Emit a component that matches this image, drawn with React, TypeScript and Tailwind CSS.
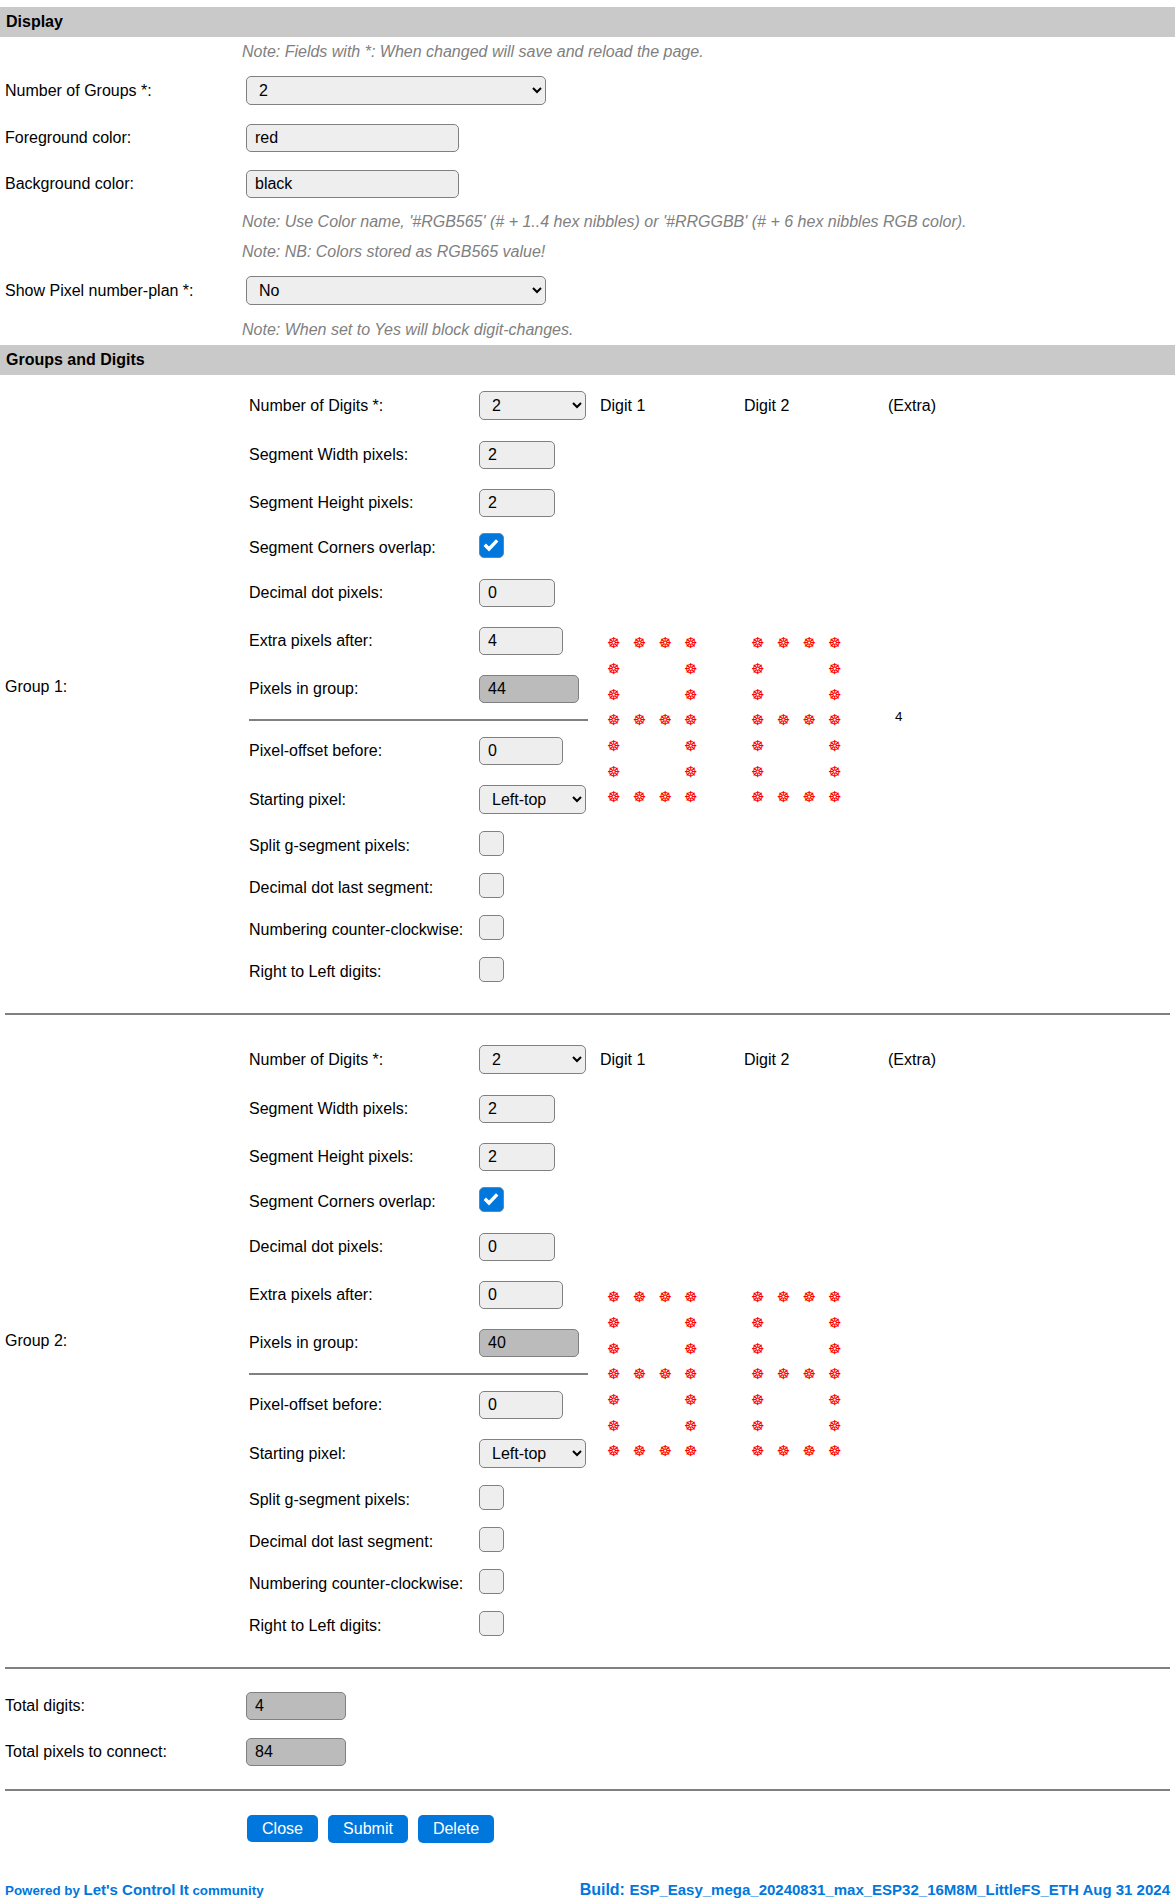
import React from "react";

const field =
  "h-[28px] rounded-[5px] border border-[#808080] bg-[#eeeeee] pl-2 pr-1 text-[16px] text-black outline-none";
const readOnlyField =
  "h-[28px] w-[100px] rounded-[5px] border border-[#808080] bg-[#bbbbbb] pl-2 pr-1 text-[16px] text-black outline-none";
const selectBox =
  "h-[29px] rounded-[5px] border border-[#808080] bg-[#eeeeee] pl-2 pr-0 text-[16px] text-black outline-none";

function Heading({ children }: { children: React.ReactNode }) {
  return (
    <h2 className="flex h-[30px] items-center bg-[#c9c9c9] pl-[6px] text-[16px] font-bold">{children}</h2>
  );
}

function Note({ className, children }: { className: string; children: React.ReactNode }) {
  return (
    <div className={`flex items-center pl-[242px] text-[16px] italic text-[#808080] ${className}`}>
      {children}
    </div>
  );
}

function Row({ label, className, children }: { label: string; className: string; children: React.ReactNode }) {
  return (
    <div className={`flex items-center ${className}`}>
      <span className="w-[246px] pl-[5px]">{label}</span>
      {children}
    </div>
  );
}

function GroupRow({ label, height, children }: { label: string; height: string; children: React.ReactNode }) {
  return (
    <div className={`flex items-center ${height}`}>
      <span className="w-[230px] whitespace-nowrap">{label}</span>
      {children}
    </div>
  );
}

function CheckRow({ label, height, checked = false }: { label: string; height: string; checked?: boolean }) {
  return (
    <div className={`flex items-center ${height}`}>
      <span className="w-[230px] whitespace-nowrap pt-[5px]">{label}</span>
      <span
        role="checkbox"
        aria-checked={checked}
        className={`flex h-[25px] w-[25px] items-center justify-center rounded-[5px] border border-[#808080] ${
          checked ? "bg-[#0077dd]" : "bg-[#eeeeee]"
        }`}
      >
        {checked && (
          <svg width="23" height="23" viewBox="0 0 23 23" fill="none" stroke="#fff" strokeWidth="3.4">
            <path d="M4.8 10.8 9 15 17.2 6.4" />
          </svg>
        )}
      </span>
    </div>
  );
}

const segmentMap = ["####", "#  #", "#  #", "####", "#  #", "#  #", "####"];

function Digit({ title }: { title: string }) {
  return (
    <div className="w-[144px]">
      <div className="flex h-[49px] items-center">{title}</div>
      <div className="ml-[1px] mt-[201px] grid w-[102.6px] grid-cols-4">
        {segmentMap.flatMap((line, y) =>
          line.split("").map((c, x) => (
            <span
              key={`${y}-${x}`}
              className="flex h-[25.67px] items-center justify-center font-['DejaVu_Sans',sans-serif] text-[15px] leading-none text-[#ff0000]"
            >
              {c === "#" ? "☸" : ""}
            </span>
          )),
        )}
      </div>
    </div>
  );
}

function Group({ name, extra, total }: { name: string; extra: string; total: string }) {
  return (
    <section className="flex h-[632px]">
      <div className="flex h-[611px] w-[249px] items-center pl-[5px]">{name}</div>
      <div className="w-[339px]">
        <GroupRow label="Number of Digits *:" height="h-[49px]">
          <select className={`${selectBox} w-[107px]`} defaultValue="2">
            <option>2</option>
          </select>
        </GroupRow>
        <GroupRow label="Segment Width pixels:" height="h-[50px]">
          <input className={`${field} w-[76px]`} defaultValue="2" />
        </GroupRow>
        <GroupRow label="Segment Height pixels:" height="h-[46px]">
          <input className={`${field} w-[76px]`} defaultValue="2" />
        </GroupRow>
        <CheckRow label="Segment Corners overlap:" height="h-[39px]" checked />
        <GroupRow label="Decimal dot pixels:" height="h-[56px]">
          <input className={`${field} w-[76px]`} defaultValue="0" />
        </GroupRow>
        <GroupRow label="Extra pixels after:" height="h-[40px]">
          <input className={`${field} w-[84px]`} defaultValue={extra} />
        </GroupRow>
        <GroupRow label="Pixels in group:" height="h-[56px]">
          <input className={readOnlyField} defaultValue={total} readOnly />
        </GroupRow>
        <hr className="mb-1 mt-[2px] border-t-2 border-[#808080]" />
        <GroupRow label="Pixel-offset before:" height="h-[52px]">
          <input className={`${field} w-[84px]`} defaultValue="0" />
        </GroupRow>
        <GroupRow label="Starting pixel:" height="h-[45px]">
          <select className={`${selectBox} w-[107px]`} defaultValue="Left-top">
            <option>Left-top</option>
          </select>
        </GroupRow>
        <CheckRow label="Split g-segment pixels:" height="h-[43px]" />
        <CheckRow label="Decimal dot last segment:" height="h-[41px]" />
        <CheckRow label="Numbering counter-clockwise:" height="h-[43px]" />
        <CheckRow label="Right to Left digits:" height="h-[41px]" />
      </div>
      <div className="flex pl-3">
        <Digit title="Digit 1" />
        <Digit title="Digit 2" />
        <div>
          <div className="flex h-[49px] items-center">(Extra)</div>
          {extra !== "0" && <div className="mt-[276px] pl-[7px] text-[13.33px] leading-[21px]">{extra}</div>}
        </div>
      </div>
    </section>
  );
}

export default function App() {
  return (
    <main className="h-[1899px] w-[1175px] overflow-hidden bg-white pt-[7px] font-['Liberation_Sans',Arial,sans-serif] text-[16px] leading-[20px] text-black">
      <Heading>Display</Heading>
      <Note className="h-[29px]">Note: Fields with *: When changed will save and reload the page.</Note>
      <Row label="Number of Groups *:" className="h-[49px]">
        <select className={`${selectBox} w-[300px]`} defaultValue="2">
          <option>2</option>
        </select>
      </Row>
      <Row label="Foreground color:" className="h-[46px]">
        <input className={`${field} w-[213px]`} defaultValue="red" />
      </Row>
      <Row label="Background color:" className="h-[46px]">
        <input className={`${field} w-[213px]`} defaultValue="black" />
      </Row>
      <Note className="h-[29px]">
        Note: Use Color name, '#RGB565' (# + 1..4 hex nibbles) or '#RRGGBB' (# + 6 hex nibbles RGB color).
      </Note>
      <Note className="h-[30px] pt-[2px]">Note: NB: Colors stored as RGB565 value!</Note>
      <Row label="Show Pixel number-plan *:" className="h-[49px]">
        <select className={`${selectBox} w-[300px]`} defaultValue="No">
          <option>No</option>
        </select>
      </Row>
      <Note className="h-[30px]">Note: When set to Yes will block digit-changes.</Note>
      <Heading>Groups and Digits</Heading>
      <div className="pt-[6px]">
        <Group name="Group 1:" extra="4" total="44" />
      </div>
      <hr className="mx-[5px] mb-5 border-t-2 border-[#808080]" />
      <Group name="Group 2:" extra="0" total="40" />
      <hr className="mx-[5px] mb-[14px] border-t-2 border-[#808080]" />
      <Row label="Total digits:" className="h-[46px]">
        <input className={readOnlyField} defaultValue="4" readOnly />
      </Row>
      <Row label="Total pixels to connect:" className="h-[46px]">
        <input className={readOnlyField} defaultValue="84" readOnly />
      </Row>
      <hr className="mx-[5px] mt-[14px] border-t-2 border-[#808080]" />
      <div className="ml-[247px] mt-6 flex items-start gap-[10px] text-white">
        <button className="h-[27px] w-[71px] rounded-[5px] bg-[#0077dd]">Close</button>
        <button className="h-[28px] w-[80px] rounded-[5px] bg-[#0077dd] pb-[1px]">Submit</button>
        <button className="h-[28px] w-[76px] rounded-[5px] bg-[#0077dd] pb-[1px]">Delete</button>
      </div>
      <footer className="mx-[5px] mt-[37px] flex items-baseline justify-between font-bold text-[#0077dd]">
        <div className="text-[13.33px]">
          Powered by <span className="text-[15px]">Let's Control It</span> community
        </div>
        <div>
          Build: <span className="text-[15px]">ESP_Easy_mega_20240831_max_ESP32_16M8M_LittleFS_ETH Aug 31 2024</span>
        </div>
      </footer>
    </main>
  );
}
